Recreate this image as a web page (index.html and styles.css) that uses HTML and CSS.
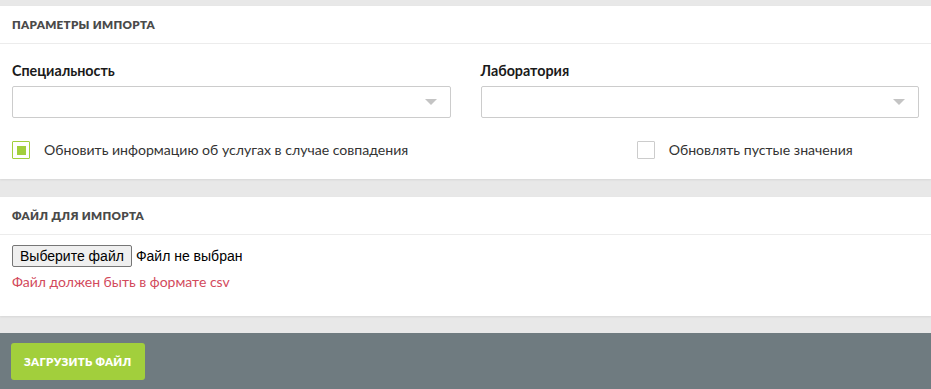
FILE: index.html
```html
<!DOCTYPE html>
<html lang="ru">
<head>
  <meta charset="UTF-8" />
  <title>Импорт услуг</title>
  <link rel="stylesheet" href="styles.css">
</head>
<body>
  <div class="card">
    <div class="card-head">Параметры импорта</div>
    <div class="card-body params">
      <div class="field half">
        <label class="field-label">Специальность</label>
        <div class="select"><span class="caret"></span></div>
      </div>
      <div class="field half">
        <label class="field-label">Лаборатория</label>
        <div class="select"><span class="caret"></span></div>
      </div>
      <label class="check wide">
        <span class="box checked"></span>
        Обновить информацию об услугах в случае совпадения
      </label>
      <label class="check narrow">
        <span class="box"></span>
        Обновлять пустые значения
      </label>
    </div>
  </div>

  <div class="card">
    <div class="card-head">Файл для импорта</div>
    <div class="card-body upload">
      <div class="file-input">
        <button class="file-btn" type="button">Выберите файл</button>
        <span class="file-name">Файл не выбран</span>
      </div>
      <p class="hint-error">Файл должен быть в формате csv</p>
    </div>
  </div>

  <footer class="actions">
    <button class="btn-submit" type="button">Загрузить файл</button>
  </footer>
</body>
</html>
```

FILE: styles.css
```css
* {
  margin: 0;
  padding: 0;
  box-sizing: border-box;
}
body {
  font-family: Lato, "Open Sans", sans-serif;
  background: #e8e8e8;
  color: #222;
  padding-top: 6px;
}

.card {
  background: #fff;
  box-shadow: 0 1px 2px rgba(0,0,0,0.08);
  margin-bottom: 18px;
}
.card-head {
  height: 38px;
  display: flex;
  align-items: center;
  padding: 0 12px;
  border-bottom: 1px solid #ececec;
  font-size: 11.6px;
  font-weight: 800;
  letter-spacing: 0.3px;
  text-transform: uppercase;
  color: #4a4a4a;
}

.params {
  display: grid;
  grid-template-columns: repeat(12, 1fr);
  column-gap: 30px;
  padding: 18px 12px 20px;
}
.half {
  grid-column: span 6;
}
.field-label {
  display: block;
  font-size: 14.3px;
  font-weight: 700;
  line-height: 18px;
  margin-bottom: 6px;
  color: #1a1a1a;
}
.select {
  height: 32px;
  border: 1px solid #ccc;
  border-radius: 2px;
  display: flex;
  align-items: center;
  justify-content: flex-end;
  padding-right: 13px;
}
.caret {
  width: 0;
  height: 0;
  border-left: 6px solid transparent;
  border-right: 6px solid transparent;
  border-top: 6px solid #c4c4c4;
}

.check {
  margin-top: 23px;
  display: flex;
  align-items: center;
  gap: 14px;
  font-size: 14.1px;
  color: #333;
  line-height: 18px;
}
.wide {
  grid-column: span 8;
}
.narrow {
  grid-column: span 4;
}
.box {
  width: 18px;
  height: 18px;
  border: 1px solid #ccc;
  border-radius: 1px;
  display: flex;
  align-items: center;
  justify-content: center;
  flex-shrink: 0;
}
.box.checked {
  border-color: #a2cf3c;
}
.box.checked::after {
  content: '';
  width: 9px;
  height: 9px;
  background: #a2cf3c;
}

.upload {
  padding: 10px 12px 25px;
}
.file-input {
  display: flex;
  align-items: center;
  gap: 4px;
  font-family: "Liberation Sans", Arial, sans-serif;
  font-size: 14px;
  color: #000;
}
.file-btn {
  font: inherit;
  height: 22px;
  padding: 0 7px;
  border: 1px solid #767676;
  border-radius: 2px;
  background: #efefef;
  color: #000;
}
.hint-error {
  margin-top: 6px;
  font-size: 14px;
  line-height: 18px;
  color: #d24a5c;
}

.actions {
  margin-top: -1px;
  background: #6f7b80;
  padding: 10px 11px 12px;
}
.btn-submit {
  height: 37px;
  padding: 0 13px;
  border: none;
  border-radius: 3px;
  background: #a2cf3c;
  color: #fff;
  font-family: Lato, sans-serif;
  font-size: 11.5px;
  font-weight: 800;
  letter-spacing: 0.3px;
  text-transform: uppercase;
}
```
